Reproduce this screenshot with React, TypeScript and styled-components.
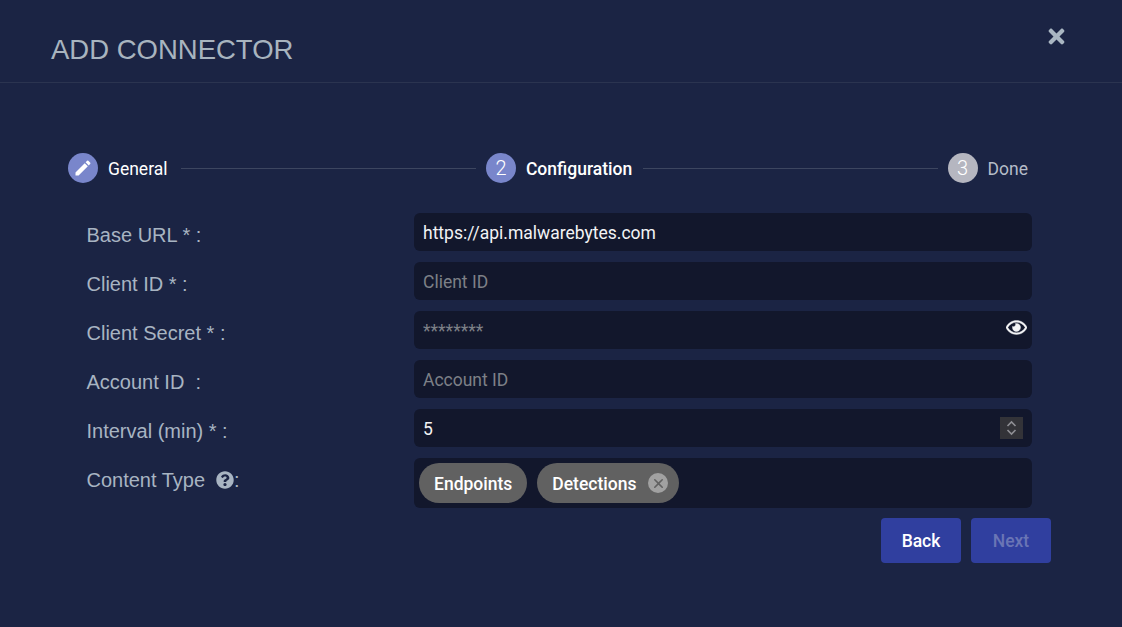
import React from "react";
import styled, { createGlobalStyle } from "styled-components";
import { FaRegEye, FaTimes, FaQuestionCircle } from "react-icons/fa";
import { MdEdit } from "react-icons/md";
import { IoClose } from "react-icons/io5";

const Global = createGlobalStyle`
  html, body { margin: 0; padding: 0; background: #1b2444; }
  body { font-family: Roboto, "Liberation Sans", sans-serif; }
  #root { width: 1122px; height: 627px; overflow: hidden; }
`;

const Dialog = styled.div`
  width: 1122px;
  height: 627px;
  background: #1b2444;
  color: #fff;
  display: flex;
  flex-direction: column;
`;

const Header = styled.header`
  height: 82px;
  box-sizing: content-box;
  border-bottom: 1px solid #2b3450;
  display: flex;
  justify-content: space-between;
  align-items: flex-start;
  padding: 0 54px 0 51px;
`;

const Title = styled.h1`
  margin: 33px 0 0;
  font: 400 27.5px/34px "Liberation Sans", Arial, sans-serif;
  color: #a8b4bf;
`;

const Close = styled.button`
  margin-top: 25px;
  padding: 0;
  border: 0;
  background: none;
  color: #a9b6c2;
  font-size: 23px;
  line-height: 23px;
  height: 23px;
  display: flex;
`;

const Stepper = styled.ol`
  list-style: none;
  margin: 70px 0 0;
  padding: 0 94px 0 68px;
  height: 30px;
  display: flex;
  align-items: center;
`;

const Step = styled.li`
  display: flex;
  align-items: center;
  gap: 10px;
  flex: none;
`;

const Circle = styled.span<{ $active?: boolean }>`
  width: 30px;
  height: 30px;
  border-radius: 50%;
  background: ${(p) => (p.$active ? "#7986cb" : "#b5b6c0")};
  color: #fff;
  font-size: 20px;
  font-weight: 300;
  display: flex;
  align-items: center;
  justify-content: center;
`;

const StepLabel = styled.span<{ $state: "done" | "active" | "idle" }>`
  font-size: 17.5px;
  line-height: 20px;
  padding-top: 2px;
  font-weight: ${(p) => (p.$state === "active" ? 500 : 400)};
  color: ${(p) => (p.$state === "idle" ? "#b5bcc8" : "#fff")};
`;

const Connector = styled.span<{ $lead: number }>`
  flex: 1;
  height: 1px;
  margin: 0 10px 0 ${(p) => p.$lead}px;
  background: #3d4660;
`;

const Form = styled.form`
  margin: 30px 0 0;
  padding: 0 90px 0 86.5px;
  display: flex;
  flex-direction: column;
  gap: 11px;
`;

const Row = styled.div`
  display: grid;
  grid-template-columns: 327.5px 618px;
  align-items: start;
`;

const Label = styled.label`
  font: 400 20px/22px "Liberation Sans", Arial, sans-serif;
  padding-top: 11px;
  color: #a8b4c2;
  display: flex;
  align-items: center;
  white-space: pre;
`;

const Field = styled.div`
  position: relative;
  height: 38px;
`;

const Input = styled.input`
  width: 100%;
  height: 38px;
  box-sizing: border-box;
  border: 0;
  outline: 0;
  border-radius: 6px;
  padding: 2px 9px 0;
  background: #12172c;
  color: #f2f3f5;
  font: 400 17.5px Roboto, sans-serif;
  &::placeholder { color: #7d8087; opacity: 1; }
  &::-webkit-inner-spin-button { display: none; }
`;

const Eye = styled(FaRegEye)`
  position: absolute;
  right: 5px;
  top: 6px;
  width: 21px;
  height: 21px;
  color: #f3f4f6;
  stroke: currentColor;
  stroke-width: 10;
`;

const Spinner = styled.span`
  position: absolute;
  right: 9px;
  top: 8px;
  width: 23px;
  height: 22px;
  background: #333338;
  color: #8f8f94;
  display: flex;
  align-items: center;
  justify-content: center;
`;

const Help = styled(FaQuestionCircle)`
  width: 18px;
  height: 18px;
  margin-left: 11px;
  color: #a8b4c2;
`;

const MultiBox = styled.div`
  height: 50px;
  box-sizing: border-box;
  border-radius: 6px;
  background: #12172c;
  padding: 5px;
  display: flex;
  gap: 10px;
`;

const Chip = styled.span`
  height: 40px;
  border-radius: 20px;
  background: #616161;
  color: #fff;
  font-size: 17.5px;
  font-weight: 500;
  padding: 2px 15px 0;
  box-sizing: border-box;
  display: flex;
  align-items: center;
  gap: 12px;
`;

const ChipX = styled.span`
  width: 20px;
  height: 20px;
  border-radius: 50%;
  background: #a1a1a1;
  color: #616161;
  margin: -2px -4px 0 0;
  display: flex;
  align-items: center;
  justify-content: center;
  font-size: 17px;
`;

const Actions = styled.div`
  margin: 10px 0 0;
  padding-right: 71px;
  display: flex;
  justify-content: flex-end;
  gap: 10px;
`;

const Button = styled.button<{ $disabled?: boolean }>`
  width: 80px;
  height: 45px;
  border: 0;
  border-radius: 4px;
  background: #303f9f;
  color: ${(p) => (p.$disabled ? "#6a75b5" : "#fff")};
  font: 500 17.5px Roboto, sans-serif;
`;

const fields = [
  { label: "Base URL * :", value: "https://api.malwarebytes.com" },
  { label: "Client ID * :", placeholder: "Client ID" },
  { label: "Client Secret * :", placeholder: "********", eye: true },
  { label: "Account ID  :", placeholder: "Account ID" },
  { label: "Interval (min) * :", value: "5", type: "number" },
];

export default function App() {
  return (
    <Dialog>
      <Global />
      <Header>
        <Title>ADD CONNECTOR</Title>
        <Close aria-label="Close"><FaTimes /></Close>
      </Header>
      <Stepper>
        <Step>
          <Circle $active><MdEdit size={20} /></Circle>
          <StepLabel $state="done">General</StepLabel>
        </Step>
        <Connector $lead={13.5} />
        <Step>
          <Circle $active>2</Circle>
          <StepLabel $state="active">Configuration</StepLabel>
        </Step>
        <Connector $lead={10.5} />
        <Step>
          <Circle>3</Circle>
          <StepLabel $state="idle">Done</StepLabel>
        </Step>
      </Stepper>
      <Form>
        {fields.map((f) => (
          <Row key={f.label}>
            <Label>{f.label}</Label>
            <Field>
              <Input type={f.type ?? "text"} defaultValue={f.value} placeholder={f.placeholder} />
              {f.eye && <Eye />}
              {f.type === "number" && (
                <Spinner>
                  <svg width="13" height="18" viewBox="0 0 13 18" fill="none" stroke="currentColor" strokeWidth="1.6">
                    <path d="M2.5 7 6.5 3l4 4M2.5 11l4 4 4-4" />
                  </svg>
                </Spinner>
              )}
            </Field>
          </Row>
        ))}
        <Row>
          <Label>Content Type<Help />:</Label>
          <MultiBox>
            <Chip>Endpoints</Chip>
            <Chip>Detections<ChipX><IoClose /></ChipX></Chip>
          </MultiBox>
        </Row>
      </Form>
      <Actions>
        <Button type="button">Back</Button>
        <Button type="button" $disabled>Next</Button>
      </Actions>
    </Dialog>
  );
}
